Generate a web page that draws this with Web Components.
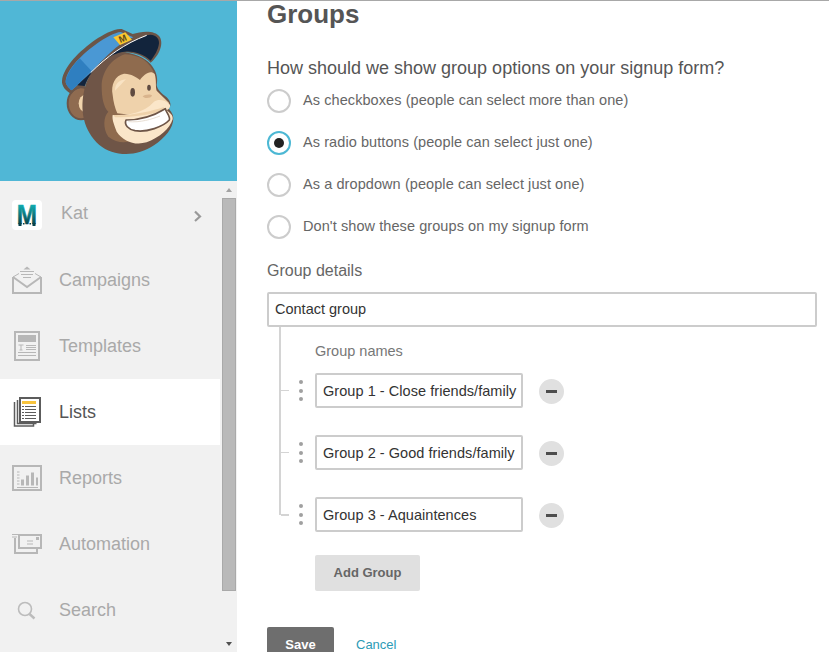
<!DOCTYPE html>
<html lang="en"><head><meta charset="utf-8"><title>Groups</title>
<style>
html,body{margin:0;padding:0;height:652px;overflow:hidden;background:#fff}
body{font-family:"Liberation Sans",Arial,sans-serif}
</style></head><body>
<app-shell>
  <side-bar slot="side">
    <monkey-hero slot="hero"></monkey-hero>
    <nav-item kind="account" label="Kat" chevron>
      <svg slot="icon" width="30" height="30" viewBox="0 0 30 30"><defs><linearGradient id="mg" x1="0" y1="0" x2="0" y2="1"><stop offset=".15" stop-color="#12b0b4"/><stop offset=".85" stop-color="#07434b"/></linearGradient></defs><rect width="30" height="30" rx="4" fill="#fff"/><text x="15" y="24" text-anchor="middle" font-family="Liberation Sans" font-weight="700" font-size="27" fill="url(#mg)" stroke="url(#mg)" stroke-width=".5" transform="translate(1.500 0) scale(.9 1)">M</text><path d="M6.500 23h3v3h-3zM11 23h1.500v1.500H11zM17.500 23h1.500v1.500h-1.500zM20.500 23h3v3h-3z" fill="#07434b"/></svg>
    </nav-item>
    <nav-item label="Campaigns">
      <svg slot="icon" width="30" height="30" viewBox="0 0 30 30" fill="none" stroke="#b7b7b7" stroke-width="2"><path d="M1 12v16h28V12"/><path d="M1 12l14 10 14-10"/><path d="M1 12l6-3.500M29 12l-6-3.500" stroke-width="1"/><path d="M8 6.500h14M9 9.500h12M11 12.500h8" stroke-width="1"/><path d="M11.500 4.500L15 1.500l3.500 3z" fill="#b7b7b7" stroke="none"/></svg>
    </nav-item>
    <nav-item label="Templates">
      <svg slot="icon" width="30" height="30" viewBox="0 0 30 30" fill="none" stroke="#b7b7b7"><rect x="3" y="1" width="24" height="28" stroke-width="2"/><rect x="6" y="4" width="18" height="7" fill="#b7b7b7" stroke="none"/><path d="M6.500 14h5M9 14v5M7.500 19h3" stroke-width="1"/><path d="M14 14.500h10M14 16.500h10M14 18.500h10M6 21.500h18M6 24.500h18" stroke-width="1"/></svg>
    </nav-item>
    <nav-item label="Lists" active>
      <svg slot="icon" width="30" height="30" viewBox="0 0 30 30" fill="none" stroke="#5c5c5c"><path d="M2.500 5v24h19v-3" stroke-width="1.500"/><path d="M5.500 3v23.500h19" stroke-width="1.500"/><rect x="8" y="1" width="20" height="24" stroke-width="2" fill="#fff"/><rect x="10" y="4" width="14" height="3" fill="#f8c43d" stroke="none"/><path d="M10 9.500h2M13 9.500h11M10 12.500h2M13 12.500h11M10 15.500h2M13 15.500h11M10 18.500h2M13 18.500h11M10 21.500h2M13 21.500h11" stroke-width="1"/></svg>
    </nav-item>
    <nav-item label="Reports">
      <svg slot="icon" width="30" height="30" viewBox="0 0 30 30" fill="none" stroke="#b7b7b7"><rect x="1" y="3" width="28" height="24" stroke-width="2"/><path d="M5 9h2.500M5 12h2.500M5 15h2.500M5 18h2.500M5 21h2.500" stroke-width="1"/><path d="M5 24.500h21" stroke-width="1"/><path d="M9 16.500h3v6h-3zM14 12.500h3v10h-3zM19 9.500h3v13h-3zM24 14.500h2v8h-2z" fill="#b7b7b7" stroke="none"/></svg>
    </nav-item>
    <nav-item label="Automation">
      <svg slot="icon" width="30" height="30" viewBox="0 0 30 30" fill="none" stroke="#b7b7b7"><path d="M0 5.500h7M0 8h5" stroke-width="1"/><path d="M7 6h22v13H7z" stroke-width="2"/><path d="M3 9v15h22v-4" stroke-width="2"/><path d="M15 12h6M15 15h6" stroke-width="1"/><rect x="24" y="8" width="3" height="3" fill="#b7b7b7" stroke="none"/></svg>
    </nav-item>
    <nav-item label="Search">
      <svg slot="icon" width="30" height="30" viewBox="0 0 30 30" fill="none" stroke="#bcbcbc"><circle cx="13" cy="14" r="6.500" stroke-width="1.600"/><path d="M17.500 19l5 4.500" stroke-width="2.400"/></svg>
    </nav-item>
  </side-bar>
  <form-panel slot="main">
    <h-title>Groups</h-title>
    <q-label>How should we show group options on your signup form?</q-label>
    <radio-row>As checkboxes (people can select more than one)</radio-row>
    <radio-row checked>As radio buttons (people can select just one)</radio-row>
    <radio-row>As a dropdown (people can select just one)</radio-row>
    <radio-row>Don't show these groups on my signup form</radio-row>
    <sub-label>Group details</sub-label>
    <text-field>Contact group</text-field>
    <group-tree>
      <group-row>Group 1 - Close friends/family</group-row>
      <group-row>Group 2 - Good friends/family</group-row>
      <group-row last>Group 3 - Aquaintences</group-row>
    </group-tree>
    <form-actions></form-actions>
  </form-panel>
</app-shell>
<script>
function def(name, html, init){
  customElements.define(name, class extends HTMLElement{
    constructor(){super();const r=this.attachShadow({mode:'open'});r.innerHTML=html;}
    connectedCallback(){ if(init) init(this, this.shadowRoot); }
  });
}
def('app-shell',`<style>:host{display:flex;width:829px;height:652px;overflow:hidden;box-sizing:border-box;border-top:1px solid #a8a8a8;background:#fff}
</style><slot name="side"></slot><slot name="main"></slot>`);

def('side-bar',`<style>:host{display:flex;flex-direction:column;width:237px;flex:none;background:#f1f1f1}
.body{display:flex;flex:1;min-height:0}.nav{flex:1;display:flex;flex-direction:column;min-width:0}
.bar{width:16px;flex:none;margin-left:1px;display:flex;flex-direction:column;align-items:center;box-sizing:border-box}
.up,.down{height:17px;flex:none;display:flex;align-items:center;justify-content:center}
.up i{border:3.500px solid transparent;border-top:0;border-bottom:4px solid #a3a3a3}
.down i{border:3.500px solid transparent;border-bottom:0;border-top:4px solid #505050}
.thumb{width:14px;height:393px;flex:none;box-sizing:border-box;background:#b9b9b9;border:1px solid #a9a9a9}
.sp{flex:1}</style>
<slot name="hero"></slot>
<div class="body"><div class="nav"><slot></slot></div>
<div class="bar"><div class="up"><i></i></div><div class="thumb"></div><div class="sp"></div><div class="down"><i></i></div></div></div>`);

def('monkey-hero',`<style>:host{display:block;height:180px;background:#50b7d6;flex:none}svg{display:block}</style>
<svg width="237" height="180" viewBox="0 3 711 540">
  <ellipse cx="243" cy="310" rx="40" ry="48" fill="#8f6b50" stroke="#6e5547" stroke-width="6"/>
  <ellipse cx="256" cy="310" rx="20" ry="26" fill="#f1d4ac"/>
  <path d="M265 287c-8 4-14 13-14 23s6 19 14 23c6-8 8-38 0-46z" fill="#8f6b50" opacity=".3"/>
  <path d="M375 157C320 160 270 205 254 265C238 330 250 392 298 435C340 470 410 472 462 436C495 414 520 385 520 355C520 340 510 332 507 326C515 315 512 305 500 292C485 280 472 270 470 255C478 225 460 170 375 157Z" fill="#6f5547"/>
  <path d="M375 163C335 175 305 215 305 260C305 290 310 320 325 335C310 350 308 385 325 410C350 430 380 430 400 420L470 290L465 225C450 185 420 165 375 163Z" fill="#8f6b4e"/>
  <path d="M338 285C332 255 345 225 372 221C392 220 410 232 420 240C430 226 450 208 464 222C470 240 466 262 470 272L508 310L440 350L352 340C345 325 340 305 338 285Z" fill="#efd2ab"/>
  <path d="M345 272C345 250 358 240 378 238C368 248 358 260 345 272Z" fill="#f9e3c4"/>
  <path d="M338 345C390 345 430 340 462 305C475 295 495 300 508 312C515 320 505 330 500 330C510 340 520 345 518 358C510 385 480 412 440 427C405 437 370 425 350 395C345 380 335 360 338 345Z" fill="#fbe6c9"/>
  <path d="M340 345C395 348 450 335 490 322L500 330C450 345 395 352 345 352Z" fill="#efd2ab"/>
  <path d="M378 360C420 360 465 345 496 326C500 340 512 350 508 360C490 380 440 398 405 392C385 388 372 375 378 360Z" fill="#fff" stroke="#6e5547" stroke-width="5" stroke-linejoin="round"/>
  <path d="M385 365C420 368 455 358 480 348" fill="none" stroke="#e9dfd4" stroke-width="3"/>
  <ellipse cx="398" cy="277" rx="7" ry="13" fill="#5f4b41"/>
  <ellipse cx="447" cy="263" rx="5.500" ry="9" fill="#5f4b41"/>
  <path d="M428 289c4-6 24-8 28-3c-1 6-6 8-12 7c-3 2-12 2-16-4z" fill="#d9b48d"/>
  <path d="M186 242C190 200 240 152 285 120C310 103 345 84 365 87L398 102C425 93 465 90 479 110C494 135 472 172 452 188C430 165 395 155 375 158C335 160 270 205 254 262C238 262 222 272 215 281C200 276 184 258 186 242Z" fill="#6b5548"/>
  <path d="M197 243C202 205 250 160 292 130C315 114 345 97 362 96L400 112C350 130 310 180 272 218L232 256L215 271C206 264 196 252 197 243Z" fill="#4a98d4"/>
  <path d="M197 243C201 222 218 196 239 175L274 212L232 256L215 271C206 264 196 252 197 243Z" fill="#2f7fc0"/>
  <path d="M232 256L272 218C320 170 375 130 440 106C462 100 478 112 477 130C475 150 462 170 452 182C430 160 395 152 375 155C330 158 275 200 254 258Z" fill="#12243c"/>
  <path d="M272 218C320 170 375 130 440 106" fill="none" stroke="#fff" stroke-width="3"/>
  <path d="M340 112L376 97L396 119L360 135Z" fill="#fcc72e"/>
  <text x="368" y="125" transform="rotate(-22 368 116)" text-anchor="middle" font-family="Liberation Sans" font-weight="700" font-size="28" fill="#5b4a1e">M</text>
</svg>`);

def('nav-item',`<style>:host{display:flex;align-items:center;height:66px;flex:none;box-sizing:border-box;padding-left:12px;color:#a9a9a9;font-size:18px}
:host([active]){background:#fff;color:#555}
:host([kind=account]) .wrap{transform:translateY(1px)}
.wrap{width:30px;height:30px;flex:none;display:block}
.t{margin-left:17px;line-height:24px;flex:1}
:host([kind=account]) .t{margin-left:19px;transform:translateY(-1px)}
.c{display:none;margin-right:18px;transform:translateY(2px)}:host([chevron]) .c{display:block}
::slotted(svg){display:block}</style>
<span class="wrap"><slot name="icon"></slot></span><span class="t" id="t"></span>
<svg class="c" width="9" height="12" viewBox="0 0 9 12" fill="none" stroke="#999" stroke-width="2.200"><path d="M2 1.500L7 6.500L2 11"/></svg>`,
(h,r)=>{r.getElementById('t').textContent=h.getAttribute('label')});

def('form-panel',`<style>:host{display:block;flex:1;min-width:0;padding-left:30px;color:#555}</style><slot></slot>`);
def('h-title',`<style>:host{display:block;font-size:26px;line-height:26px;font-weight:700;color:#555}</style><slot></slot>`);
def('q-label',`<style>:host{display:block;font-size:18px;line-height:24px;margin-top:29px;color:#555}</style><slot></slot>`);
def('radio-row',`<style>:host{display:flex;align-items:center;height:42px;font-size:14.500px;letter-spacing:.08px;color:#666}
.o{width:24px;height:24px;box-sizing:border-box;border:2px solid #ccc;border-radius:50%;flex:none;margin-right:12px;display:flex;align-items:center;justify-content:center;background:#fff}
.l{padding-bottom:2px}
:host([checked]) .o{border-color:#4cb8d4}
:host([checked]) .o::after{content:"";width:10px;height:10px;border-radius:50%;background:#222}</style>
<span class="o"></span><span class="l"><slot></slot></span>`);
def('sub-label',`<style>:host{display:block;font-size:16px;line-height:22px;margin-top:12px;color:#666}</style><slot></slot>`);
def('text-field',`<style>:host{display:block;width:550px;height:35px;margin-top:10px;box-sizing:border-box;border:2px solid #ccc;border-radius:2px;padding:0 6px;font-size:14.500px;line-height:31px;color:#333;white-space:nowrap;overflow:hidden;background:#fff}</style><slot></slot>`);
def('group-tree',`<style>:host{display:flow-root;margin-left:12px;border-left:2px solid #d4d4d4;width:300px}
.h{font-size:14.500px;line-height:24px;color:#777;padding:12px 0 0 34px;margin-bottom:10px}
.rows{display:flex;flex-direction:column;gap:27px;margin-bottom:-17px}</style>
<div class="h">Group names</div><div class="rows"><slot></slot></div>`);
def('group-row',`<style>:host{display:flex;align-items:center;height:35px}
.s{width:8px;height:1px;background:#d4d4d4;flex:none}
:host([last]) .s{height:2px}
.d{width:24px;margin-right:2px;flex:none;display:flex;flex-direction:column;align-items:center;gap:4.300px}
.d i{width:4px;height:4px;border-radius:50%;background:#a0a0a0}
.f{width:208px;height:35px;box-sizing:border-box;border:2px solid #ccc;border-radius:2px;padding:0 6px;font-size:14.500px;letter-spacing:.05px;line-height:33px;color:#333;white-space:nowrap;overflow:hidden;flex:none;background:#fff}
.m{width:25px;height:25px;border-radius:50%;background:#e0e0e0;margin-left:16px;flex:none;display:flex;align-items:center;justify-content:center;transform:translateY(1px)}
.m i{width:11px;height:3px;background:#4d4d4d}</style>
<span class="s"></span><span class="d"><i></i><i></i><i></i></span><span class="f"><slot></slot></span><span class="m"><i></i></span>`);
def('form-actions',`<style>:host{display:block;margin-top:40px}
.b{display:flex;align-items:center;justify-content:center;box-sizing:border-box;border-radius:2px;font-weight:700;font-size:13px;height:36px;padding-bottom:2px}
.add{width:105px;margin-left:48px;background:#e0e0e0;color:#666}
.row{display:flex;align-items:center;gap:22px;margin-top:36px}
.save{width:67px;background:#6e6e6e;color:#fff}
.c{color:#2d9bb6;font-size:13px;padding-bottom:2px}</style>
<div class="b add">Add Group</div>
<div class="row"><div class="b save">Save</div><span class="c">Cancel</span></div>`);
</script>
</body></html>
